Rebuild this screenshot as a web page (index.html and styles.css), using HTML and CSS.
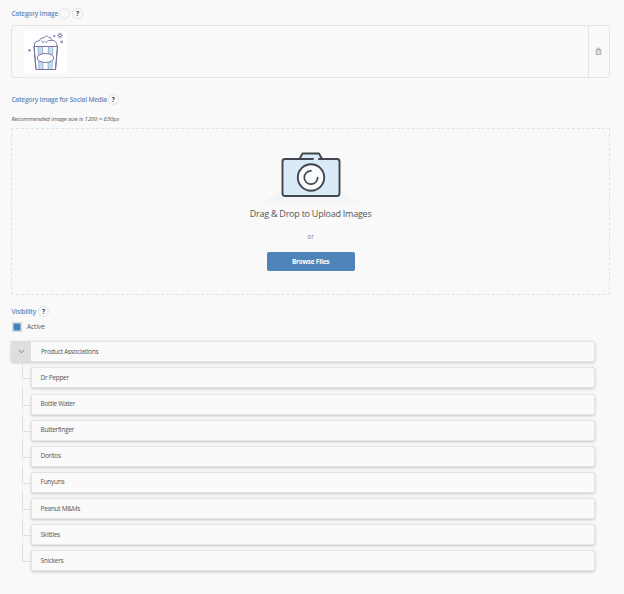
FILE: index.html
```
<!DOCTYPE html>
<html lang="en">
<head>
<meta charset="utf-8">
<title>Category</title>
<link rel="stylesheet" href="styles.css">
</head>
<body>
<main>
  <div class="label"><span>Category Image</span><i class="dot"></i><i class="help">?</i></div>
  <section class="image-box">
    <div class="thumb">
      <svg width="43" height="42" viewBox="0 0 43 42" fill="none" stroke="#76739f" stroke-width="1" stroke-linejoin="round">
        <path d="M10 15.500H33.500L31.500 38.500H12Z" fill="#fff"/>
        <path d="M14 16H18.500L19 38H15ZM24.500 16H28.500L27.500 38H24Z" fill="#b9e0f5" stroke="none"/>
        <path d="M14 16L15 38M18.500 16L19 38M24.500 16L24 38M29 16L28 38" stroke-width=".5"/>
        <path d="M10 15.500H33.500L31.500 38.500H12Z"/>
        <path d="M10.500 15C10 12 12 10 15 10C16 7.500 18 6.500 20 7C21 4.500 24 4.500 25 6.500C27 6.500 28 8 27 9.500C30 8.500 33 11 33 15"/>
        <path d="M17 9.500C18 9.500 18.500 10 18.500 11.500L20.500 10.500L22.500 11.500L24 9.500L27 9.500" stroke-width=".8"/>
        <ellipse cx="21.500" cy="27" rx="8.300" ry="4.500" fill="#fff"/>
        <circle cx="36" cy="4.500" r="1.500" stroke-width=".9"/>
        <path d="M36 1.700V3M36 6V7.300M33.200 4.500H34.500M37.500 4.500H38.800M34 2.500L35 3.500M38 2.500L37 3.500M34 6.500L35 5.500M38 6.500L37 5.500" stroke-width=".8"/>
        <g fill="#9896bd" stroke="none"><circle cx="30.300" cy="5" r="1.200"/><circle cx="37.700" cy="11" r="1.400"/><circle cx="5.500" cy="19.300" r="1.400"/></g>
      </svg>
    </div>
    <div class="trash">
      <svg width="7" height="9" viewBox="0 0 7 9" fill="none"><path d="M1.200 2.800H5.800V7.500H1.200Z" fill="#ddd" stroke="#999" stroke-width=".7"/><path d="M.8 2.500H6.200M2.500 2.200V1H4.500V2.200" stroke="#aaa" stroke-width=".7"/></svg>
    </div>
  </section>
  <div class="label social"><span>Category Image for Social Media</span><i class="help">?</i></div>
  <p class="note">Recommended image size is 1200 × 630px</p>
  <section class="drop">
    <svg class="camera" width="98" height="53" viewBox="0 0 98 53" fill="none" stroke="#41464c" stroke-width="1.900" stroke-linejoin="round" stroke-linecap="round">
      <path d="M0 52L20 40H78L98 52Z" fill="#f2f4f8" stroke="none"/>
      <path d="M20 8H77V45H20Z" fill="#d9eaf9" stroke="none"/>
      <path d="M37.500 8L40.500 2.500H57L60 8" fill="#d9eaf9"/>
      <path d="M51 8H23Q20.500 8 20.500 10.500V42.500Q20.500 45 23 45H75Q77.500 45 77.500 42.500V10.500Q77.500 8 75 8H57"/>
      <circle cx="49" cy="26.500" r="13.200" fill="#f9fafb"/>
      <path d="M49 19.800A6.700 6.700 0 1 0 55.700 26.500" stroke-width="1.700"/>
    </svg>
    <div class="drop-title">Drag &amp; Drop to Upload Images</div>
    <div class="or">or</div>
    <button class="browse">Browse Files</button>
  </section>
  <div class="label visibility"><span>Visibility</span><i class="help">?</i></div>
  <div class="active"><i class="check"></i><span>Active</span></div>
  <section class="tree">
    <div class="row parent"><span class="toggle"><svg width="7" height="5" viewBox="0 0 7 5" fill="none" stroke="#777" stroke-width=".9"><path d="M.8 1L3.500 3.800L6.200 1"/></svg></span><span class="name">Product Associations</span></div>
    <div class="children">
      <div class="row"><span>Dr Pepper</span></div>
      <div class="row"><span>Bottle Water</span></div>
      <div class="row"><span>Butterfinger</span></div>
      <div class="row"><span>Doritos</span></div>
      <div class="row"><span>Funyuns</span></div>
      <div class="row"><span>Peanut M&amp;Ms</span></div>
      <div class="row"><span>Skittles</span></div>
      <div class="row"><span>Snickers</span></div>
    </div>
  </section>
</main>
</body>
</html>
```
FILE: styles.css
```
* { box-sizing: border-box; }
body { margin: 0; background: #f9f9f9; color: #555; font: 6.5px/10px "Open Sans", sans-serif; }
main { width: 598.4px; margin-left: 11.4px; padding: 8px 0 20px; }
.label { display: flex; align-items: center; height: 11px; color: #6488bd; font-weight: 600; letter-spacing: -.17px; }
.dot, .help { flex: none; width: 11px; height: 11px; border: 1px solid #e4e4e4; border-radius: 50%; }
.dot { margin-left: 1px; }
.help { margin-left: 2px; color: #444; font: 700 6.5px/9px "Open Sans", sans-serif; letter-spacing: 0; text-align: center; }
.social .help { margin-left: 1px; }
.image-box { display: flex; height: 53px; margin-top: 6px; border: 1px solid #e4e4e4; border-radius: 3px; }
.thumb { flex: 1; padding: 5px 0 0 12px; }
.thumb svg { display: block; background: #fff; }
.trash { display: flex; align-items: center; justify-content: center; width: 21px; border-left: 1px solid #e4e4e4; }
.social { margin-top: 16px; }
.note { margin: 9px 0 0; font-size: 6px; font-style: italic; letter-spacing: -.1px; white-space: nowrap; }
.drop { display: flex; flex-direction: column; align-items: center; height: 167px; margin-top: 4px; padding-top: 22px; border: 1px dashed #e2e2e2; }
.camera { display: block; flex: none; }
.drop-title { margin-top: 3px; font-size: 9px; line-height: 14px; letter-spacing: -.24px; }
.or { margin-top: 11px; color: #888; }
.browse { width: 88px; height: 19px; margin-top: 9.5px; padding: 0; border: 0; border-radius: 2px; background: #4e84b7; color: #fff; font: 700 6.5px/19px "Open Sans", sans-serif; letter-spacing: -.24px; }
.visibility { margin-top: 11px; }
.active { display: flex; align-items: center; height: 10px; margin-top: 5px; }
.check { width: 10px; height: 10px; margin: 0 4.5px 0 1px; border: 1px solid #d0d6dc; background: #4480b8; box-shadow: inset 0 0 0 .5px #e8eef4; }
.tree { width: 584px; margin-top: 9.4px; letter-spacing: -.29px; }
.row { display: flex; align-items: center; height: 21px; border: 1px solid #e4e4e4; border-radius: 2px; background: #fafafa; box-shadow: 0 1px 3px #0003; }
.toggle { display: flex; align-items: center; justify-content: center; width: 20px; height: 21px; margin-left: -1px; background: #dedede; }
.name { margin-left: 9.5px; }
.children { display: grid; gap: 5.14px; margin-top: 5px; padding-left: 19.2px; }
.children .row { position: relative; padding-left: 9px; }
.children .row::before { content: ""; position: absolute; left: -10px; top: -6px; width: 9px; height: 16px; border: solid #dedede; border-width: 0 0 1px 1px; }
.children .row:not(:last-child)::after { content: ""; position: absolute; left: -10px; top: 10px; width: 1px; height: 11px; background: #efefef; }
```
